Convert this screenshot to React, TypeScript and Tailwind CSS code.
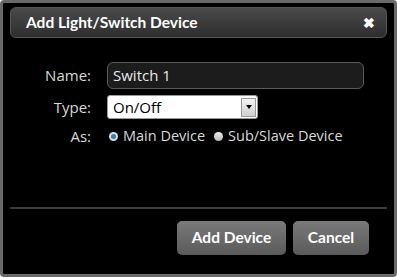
import React from "react";

export default function App() {
  return (
    <div className="w-[397px] h-[277px] bg-white" style={{ fontFamily: '"Open Sans", "Noto Sans", sans-serif' }}>
      <div className="w-full h-full flex flex-col border-[3px] border-[#6a6a6a] rounded-[4px] bg-black">
        <div className="mx-[7px] mt-[4px] h-[31px] flex items-center justify-between pl-[15px] pr-[11px] rounded-[6px] bg-gradient-to-b from-[#4a4a4a] to-[#2e2e2e] border border-[#555]">
          <span className="text-white text-[15.5px] font-bold" style={{ fontFamily: "Lato, sans-serif" }}>
            Add Light/Switch Device
          </span>
          <span className="text-white text-[14px] font-bold leading-none">✖</span>
        </div>

        <div className="flex flex-col gap-[6px] pt-[24px] pl-[10px]">
          <div className="flex items-center">
            <span className="w-[94px] text-right pr-[16px] text-[#d8d8d8] text-[15px]">Name:</span>
            <div className="w-[257px] h-[27px] rounded-[6px] bg-[#1c1c1c] border border-[#5a5a5a] flex items-center px-[5px] text-[#e8e8e8] text-[15px]">
              Switch 1
            </div>
          </div>
          <div className="flex items-center">
            <span className="w-[94px] text-right pr-[16px] text-[#d8d8d8] text-[15px]">Type:</span>
            <div className="w-[151px] h-[24px] rounded-[3px] bg-white border border-[#999] flex items-center justify-between pl-[5px] pr-[1px] text-black text-[15px]">
              On/Off
              <div className="w-[15px] h-[19px] bg-gradient-to-b from-[#f4f4f4] to-[#cfcfcf] border border-[#9a9a9a] flex items-center justify-center">
                <div className="w-0 h-0 border-l-[3px] border-r-[3px] border-t-[4px] border-l-transparent border-r-transparent border-t-black" />
              </div>
            </div>
          </div>
          <div className="flex items-center">
            <span className="w-[94px] text-right pr-[16px] text-[#d8d8d8] text-[15px]">As:</span>
            <div className="flex items-center gap-[5px] pl-[2px] text-[#d8d8d8] text-[14.5px]">
              <span className="w-[9px] h-[9px] rounded-full bg-[#dcdcdc] flex items-center justify-center">
                <span className="w-[5px] h-[5px] rounded-full bg-[#3a7bbf]" />
              </span>
              <span>Main Device</span>
              <span className="ml-[4px] w-[9px] h-[9px] rounded-full bg-gradient-to-b from-[#f0f0f0] to-[#b8b8b8]" />
              <span>Sub/Slave Device</span>
            </div>
          </div>
        </div>

        <div className="flex-1" />
        <div className="mx-[7px] h-[2px] bg-[#3c3c3c]" />
        <div className="flex justify-end gap-[7px] pr-[25px] pt-[12px] pb-[19px]" style={{ fontFamily: "Lato, sans-serif" }}>
          <div className="w-[109px] h-[34px] rounded-[5px] bg-gradient-to-b from-[#7a7a7a] to-[#5a5a5a] flex items-center justify-center text-white text-[15.5px] font-bold">
            Add Device
          </div>
          <div className="w-[76px] h-[34px] rounded-[5px] bg-gradient-to-b from-[#7a7a7a] to-[#5a5a5a] flex items-center justify-center text-white text-[15.5px] font-bold">
            Cancel
          </div>
        </div>
      </div>
    </div>
  );
}
